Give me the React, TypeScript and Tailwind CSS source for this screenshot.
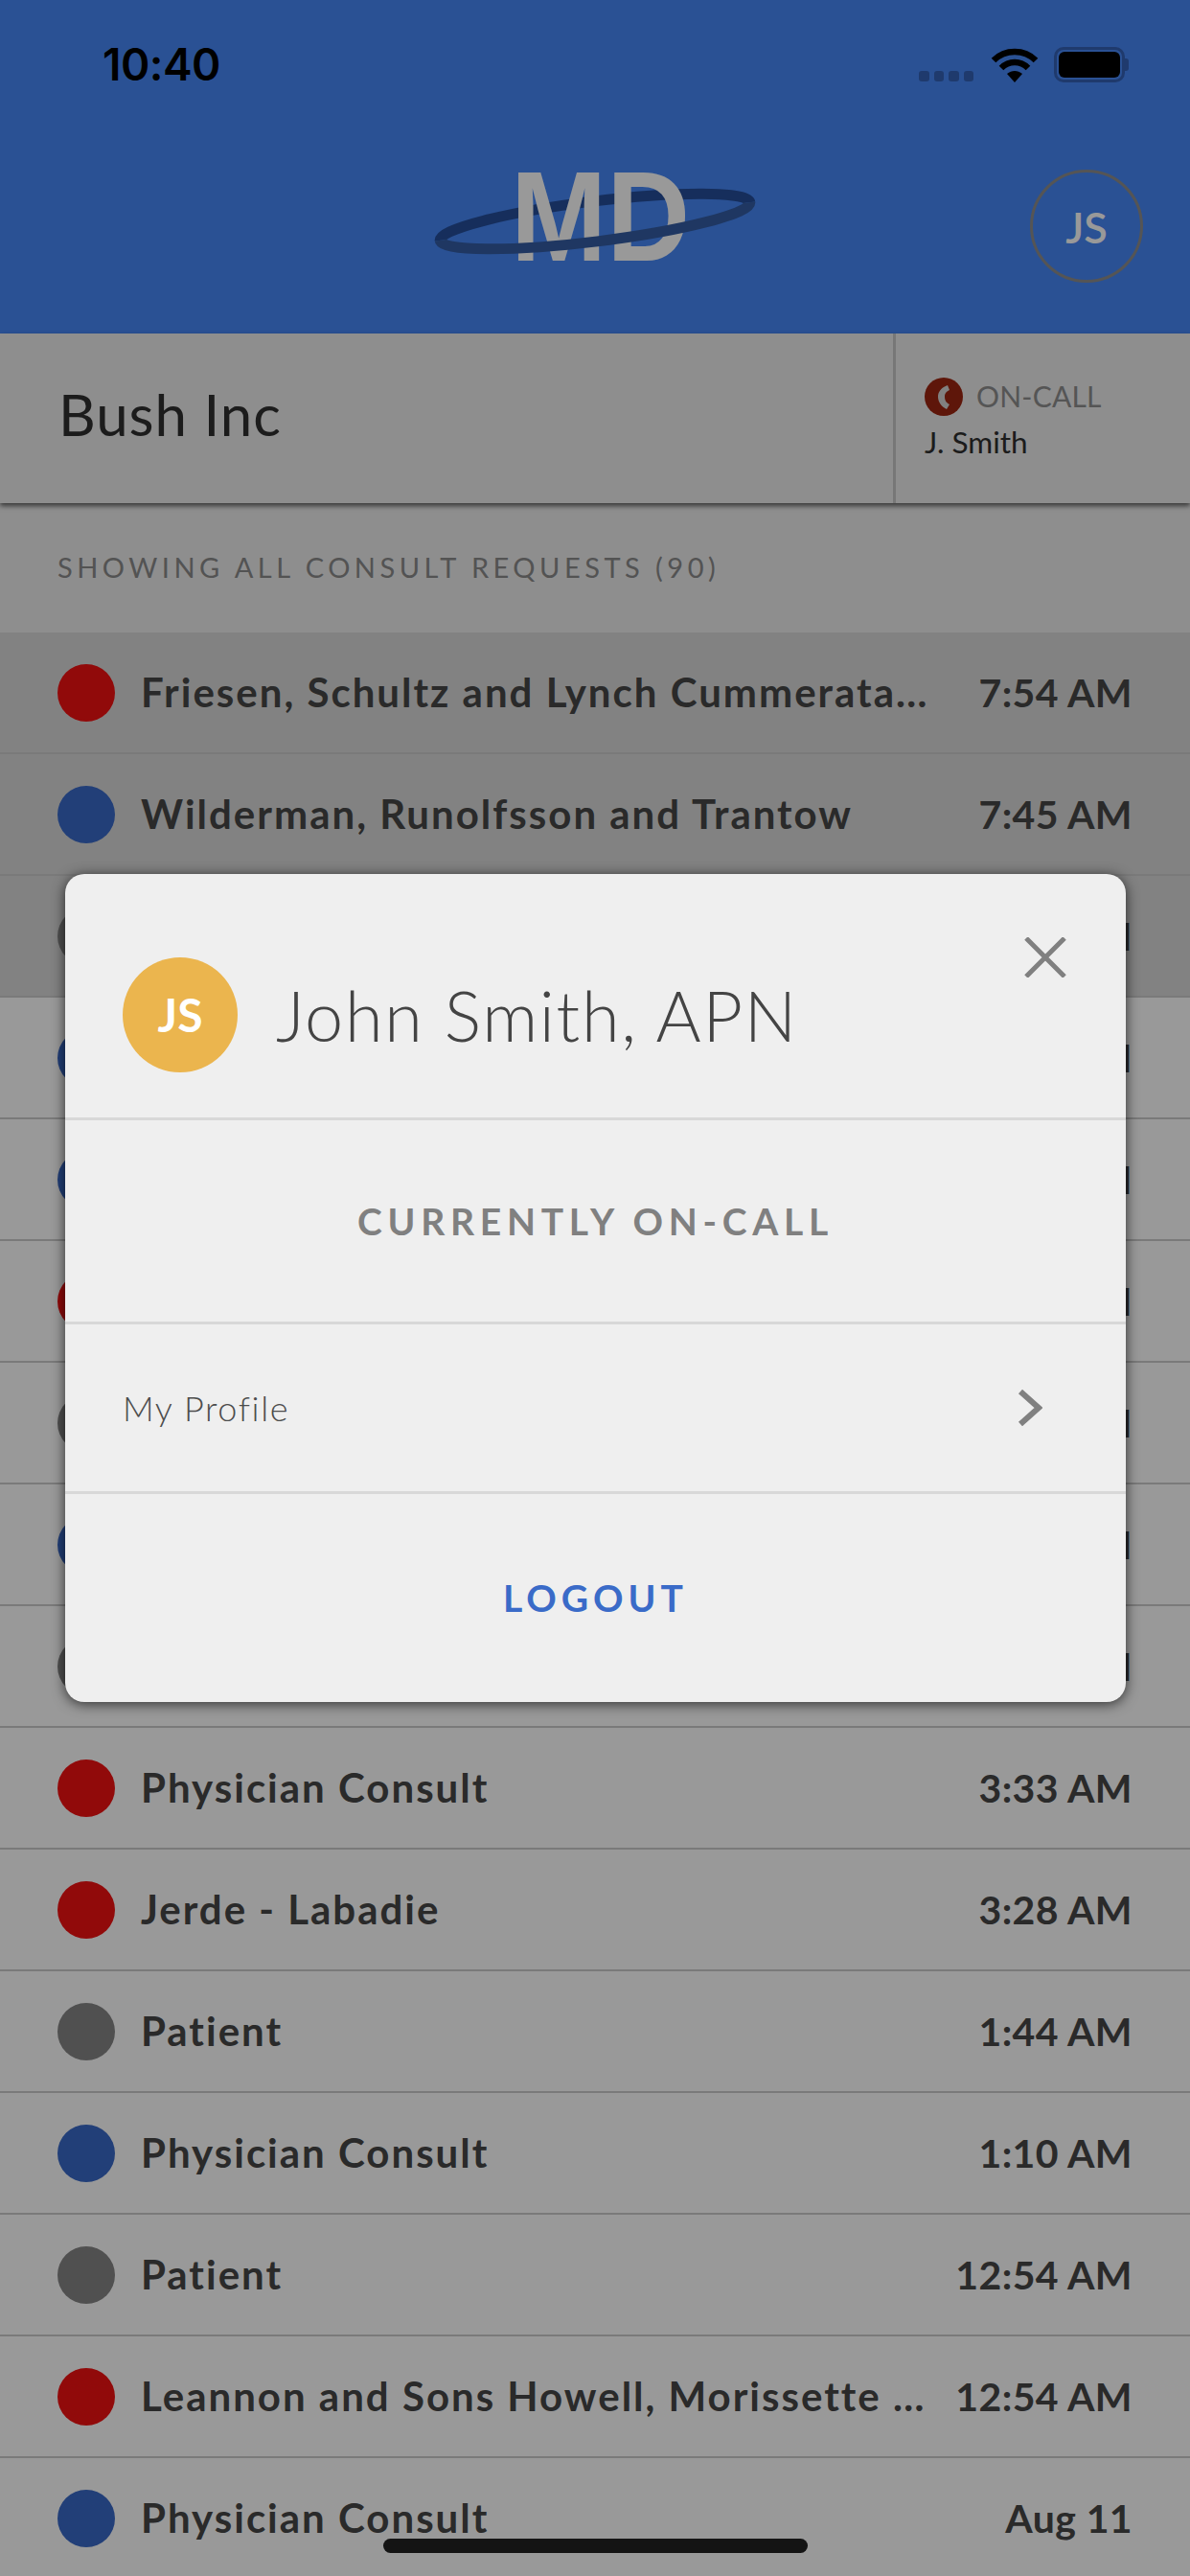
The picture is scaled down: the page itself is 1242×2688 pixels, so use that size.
import React from 'react';

const font = { fontFamily: 'Lato, "Noto Sans", sans-serif' };

const consults = [
  { name: 'Friesen, Schultz and Lynch Cummerata…', time: '7:54 AM', dot: 'bg-[#f21111]', unread: true },
  { name: 'Wilderman, Runolfsson and Trantow', time: '7:45 AM', dot: 'bg-[#3969c8]', unread: true },
  { name: 'Patient', time: '7:12 AM', dot: 'bg-[#868686]', unread: true },
  { name: 'Physician Consult', time: '6:58 AM', dot: 'bg-[#3969c8]' },
  { name: 'Physician Consult', time: '6:40 AM', dot: 'bg-[#3969c8]' },
  { name: 'Physician Consult', time: '6:21 AM', dot: 'bg-[#f21111]' },
  { name: 'Patient', time: '5:47 AM', dot: 'bg-[#868686]' },
  { name: 'Physician Consult', time: '5:02 AM', dot: 'bg-[#3969c8]' },
  { name: 'Patient', time: '4:15 AM', dot: 'bg-[#868686]' },
  { name: 'Physician Consult', time: '3:33 AM', dot: 'bg-[#f21111]' },
  { name: 'Jerde - Labadie', time: '3:28 AM', dot: 'bg-[#f21111]' },
  { name: 'Patient', time: '1:44 AM', dot: 'bg-[#868686]' },
  { name: 'Physician Consult', time: '1:10 AM', dot: 'bg-[#3969c8]' },
  { name: 'Patient', time: '12:54 AM', dot: 'bg-[#868686]' },
  { name: 'Leannon and Sons Howell, Morissette …', time: '12:54 AM', dot: 'bg-[#f21111]' },
  { name: 'Physician Consult', time: 'Aug 11', dot: 'bg-[#3969c8]' },
];

const Logo = () => (
  <svg width="340" height="118" viewBox="0 0 340 118">
    <g transform="rotate(-7 170 54)">
      <path d="M 7 54 A 163 21 0 0 1 333 54" fill="none" stroke="#254e99" strokeWidth="11" />
    </g>
    <text x="82" y="95" fontSize="134" fontWeight="700" fill="#fff" textLength="187" lengthAdjust="spacingAndGlyphs" fontFamily="Liberation Sans, sans-serif">
      MD
    </text>
    <g transform="rotate(-7 170 54)">
      <path d="M 333 54 A 163 21 0 0 1 7 54" fill="none" stroke="#345da3" strokeWidth="11" />
    </g>
  </svg>
);

const Wifi = () => (
  <svg width="50" height="36" viewBox="0 0 50 36" fill="none" stroke="#000" strokeWidth="6.5">
    <path d="M3 13 C15 1 35 1 47 13" />
    <path d="M11 21 C19 13 31 13 39 21" />
    <path d="M25 36 L17 27 C22 23 28 23 33 27 Z" fill="#000" stroke="none" />
  </svg>
);

const StatusBar = () => (
  <div className="h-[134px] flex items-center justify-between pl-[107px] pr-[64px]">
    <span className="text-[46px] font-semibold text-black tracking-[-0.5px]" style={{ fontFamily: 'Inter, sans-serif' }}>10:40</span>
    <div className="flex items-end">
      <div className="flex gap-[5px] mr-[18px] mb-[1px]">
        {[0, 1, 2, 3].map((i) => (
          <span key={i} className="w-[10.5px] h-[11px] rounded-[3px] bg-[#3461b6]" />
        ))}
      </div>
      <Wifi />
      <div className="flex items-center ml-[16px]">
        <div className="w-[74px] h-[37px] rounded-[10px] border-[3px] border-[#3461b6] p-[2px]">
          <div className="w-full h-full rounded-[6px] bg-black" />
        </div>
        <div className="w-[4px] h-[13px] rounded-r-[3px] bg-[#3461b6]" />
      </div>
    </div>
  </div>
);

const Row = ({ item }: { item: (typeof consults)[number] }) => (
  <div className={`h-[127px] shrink-0 flex items-center pl-[60px] pr-[60px] border-b-2 border-[#cccccc] ${item.unread ? 'bg-[#d9d9d9]' : 'bg-white'}`}>
    <span className={`w-[60px] h-[60px] rounded-full shrink-0 ${item.dot}`} />
    <span className="ml-[27px] flex-1 truncate text-[42px] font-bold text-[#464646] tracking-[2px]">{item.name}</span>
    <span className="ml-4 text-[41px] font-bold text-[#464646] tracking-[0.4px]">{item.time}</span>
  </div>
);

const App: React.FC = () => {
  return (
    <div className="relative w-[1242px] h-[2688px] overflow-hidden bg-white" style={font}>
      <header className="h-[348px] bg-[#4687f7]">
        <StatusBar />
        <div className="mt-[43px] grid grid-cols-[1fr_auto_1fr] px-[49px]">
          <div />
          <Logo />
          <div className="flex justify-end">
            <div className="w-[118px] h-[118px] rounded-full border-[3px] border-[#8e8e8e] flex items-center justify-center text-white text-[45px] font-semibold pt-[4px]">
              JS
            </div>
          </div>
        </div>
      </header>

      <div className="relative z-10 h-[177px] bg-[#ededed] flex shadow-[0_3px_5px_rgba(0,0,0,0.6)]">
        <div className="w-[935px] pl-[61px] pb-[10px] flex items-center border-r-[3px] border-[#c6c6c6]">
          <span className="text-[60px] text-[#303030] tracking-[1px]">Bush Inc</span>
        </div>
        <div className="flex-1 pl-[30px] pt-[43px]">
          <div className="flex items-center">
            <span className="w-[40px] h-[40px] rounded-full bg-[#9d2611] flex items-center justify-center">
              <svg width="24" height="30" viewBox="0 0 24 30">
                <path d="M16 3 C8 6 6 11 6 15 C6 20 9 25 15 28 L18 23 C14 21 13 18 13 15 C13 12 14 10 18 8 Z" fill="#d8d8d8" />
              </svg>
            </span>
            <span className="ml-[14px] text-[30px] text-[#8e8e8e] tracking-[0.2px]">ON-CALL</span>
          </div>
          <div className="mt-[2px] text-[31.5px] text-[#303030]">J. Smith</div>
        </div>
      </div>

      <div className="h-[135px] bg-[#ededed] pl-[60px] pt-[50px]">
        <span className="block text-[29px] leading-[34px] text-[#8a8a8a] tracking-[4.5px] font-normal">SHOWING ALL CONSULT REQUESTS (90)</span>
      </div>

      <div className="flex flex-col">
        {consults.map((item, i) => (
          <Row key={i} item={item} />
        ))}
      </div>

      {/* dim layer + profile modal */}
      <div className="absolute inset-0 z-20 bg-black/40" />
      <div className="absolute z-30 left-[68px] top-[912px] w-[1107px] h-[864px] rounded-[20px] bg-[#efefef] shadow-[0_2px_14px_rgba(0,0,0,0.7)] flex flex-col">
        <div className="relative h-[257px] shrink-0 flex items-center pl-[60px] pt-[40px] border-b-[3px] border-[#d8d8d8]">
          <span className="w-[120px] h-[120px] rounded-full bg-[#ebb54e] flex items-center justify-center text-white text-[48px] font-bold">JS</span>
          <span className="ml-[40px] text-[72px] font-light text-[#444444] tracking-[1.7px]">John Smith, APN</span>
          <svg className="absolute left-[1001px] top-[66px]" width="44" height="42" viewBox="0 0 44 42" fill="none" stroke="#808080" strokeWidth="5">
            <path d="M2 1 L42 41 M42 1 L2 41" />
          </svg>
        </div>
        <div className="h-[213px] shrink-0 flex items-center justify-center border-b-[3px] border-[#d8d8d8]">
          <span className="text-[39px] font-bold text-[#808080] tracking-[5.7px]">CURRENTLY ON-CALL</span>
        </div>
        <div className="h-[177px] shrink-0 flex items-center justify-between pl-[60px] pr-[87px] border-b-[3px] border-[#d8d8d8]">
          <span className="text-[36px] font-light text-[#4c4c4c] tracking-[1.6px]">My Profile</span>
          <svg width="26" height="38" viewBox="0 0 26 38" fill="none" stroke="#808080" strokeWidth="6">
            <path d="M3 2 L22 19 L3 36" />
          </svg>
        </div>
        <div className="flex-1 flex items-center justify-center">
          <span className="text-[39px] font-bold text-[#3a6bc8] tracking-[5px]">LOGOUT</span>
        </div>
      </div>

      <div className="absolute z-40 left-[400px] top-[2649px] w-[443px] h-[15px] rounded-full bg-[#141414]" />
    </div>
  );
};

export default App;
